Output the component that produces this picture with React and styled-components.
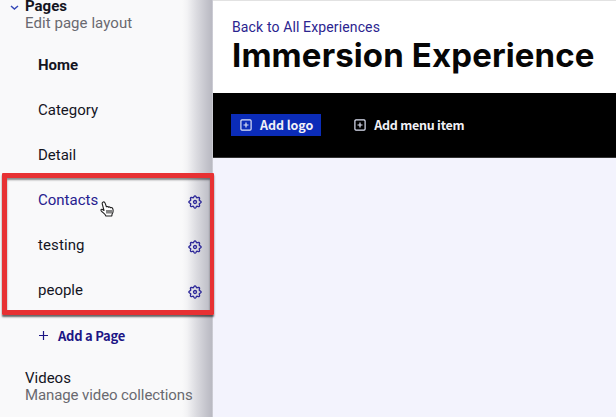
import React from 'react';
import styled, { createGlobalStyle } from 'styled-components';

const Global = createGlobalStyle`
  * { box-sizing: border-box; }
  body { margin: 0; overflow: hidden; }
`;

const Screen = styled.div`
  position: relative;
  display: grid;
  grid-template-columns: 213px 1fr;
  width: 616px;
  height: 417px;
  overflow: hidden;
  font-family: Roboto, sans-serif;
  background: #f3f3fd;
`;

const Sidebar = styled.nav`
  display: flex;
  flex-direction: column;
  color: #14151f;
  font-size: 15px;
  background: linear-gradient(to right, #f9f9fa 182px, #f3f3f5 187px, #dcdce1 196px, #c3c3cb 207px, #b9b9c2 212px, #dedee5 213px);
`;

const Section = styled.section`
  display: grid;
  grid-template-columns: 16px 1fr;
  column-gap: 9px;
  height: ${p => p.$height}px;
  padding-top: ${p => p.$top || 0}px;
`;

const SectionText = styled.div`
  display: flex;
  flex-direction: column;
  line-height: 17px;
  white-space: nowrap;
`;

const SectionName = styled.span`
  line-height: ${p => (p.$open ? 13 : 17)}px;
  padding-bottom: ${p => (p.$open ? 2 : 0)}px;
  font-weight: ${p => (p.$open ? 700 : 400)};
`;

const SectionNote = styled.span`
  color: #696970;
  letter-spacing: ${p => p.$spacing}px;
`;

const Chevron = styled.svg`
  width: 9px;
  height: 7px;
  margin: 4px 0 0 10px;
`;

const PageList = styled.ul`
  margin: 0;
  padding: 0;
  list-style: none;
`;

const PageItem = styled.li`
  display: flex;
  align-items: center;
  justify-content: space-between;
  height: 45px;
  padding: 0 11px 0 38px;
  color: ${p => (p.$hovered ? '#27208f' : '#14151f')};
  font-weight: ${p => (p.$current ? 700 : 400)};
  letter-spacing: ${p => p.$spacing || 0}px;
`;

const GearIcon = styled.svg`
  width: 14px;
  height: 14px;
  margin-top: 4px;
`;

const AddPage = styled.button`
  display: flex;
  align-items: center;
  gap: 10px;
  height: 47px;
  padding: 0 0 0 39px;
  border: 0;
  background: none;
  color: #1c1585;
  font: 700 13px 'Noto Sans CJK JP', sans-serif;
  letter-spacing: -0.24px;
`;

const PlusIcon = styled.svg`
  width: 9px;
  height: 9px;
`;

const Main = styled.main`
  display: flex;
  flex-direction: column;
  background: #f3f3fd;
`;

const Header = styled.header`
  height: 93px;
  padding: 17px 0 0 19px;
  border-top: 1px solid #e2e2e2;
  background: #fff;
  white-space: nowrap;
`;

const BackLink = styled.a`
  display: block;
  color: #2b248f;
  font-size: 14px;
  line-height: 18px;
  letter-spacing: 0.13px;
`;

const Title = styled.h1`
  margin: 0;
  color: #060606;
  font: 700 33px/38px Inter, sans-serif;
  letter-spacing: 0.12px;
`;

const MenuBar = styled.div`
  display: flex;
  align-items: center;
  gap: 24px;
  height: 65px;
  padding-left: 18px;
  border-bottom: 1px solid #333;
  background: #000;
`;

const MenuButton = styled.button`
  display: flex;
  align-items: center;
  gap: 8px;
  height: 22px;
  padding: 0 8px 0 9px;
  border: 0;
  background: ${p => (p.$filled ? '#0b2cb8' : 'transparent')};
  color: #f1f1f6;
  font: 700 12.5px/22px 'Noto Sans CJK JP', sans-serif;
  letter-spacing: ${p => (p.$filled ? -0.07 : -0.24)}px;
  white-space: nowrap;
`;

const BoxIcon = styled.svg`
  width: 12px;
  height: 12px;
`;

const Highlight = styled.div`
  position: absolute;
  left: 2px;
  top: 173px;
  width: 212px;
  height: 142px;
  border: 5px solid #e73133;
  border-width: 5px 4px 5px 5px;
  border-radius: 1px;
  box-shadow: 0 2px 2px rgba(0, 0, 0, 0.6), inset 0 2px 2px rgba(0, 0, 0, 0.45);
`;

const Pointer = styled.svg`
  position: absolute;
  left: 100px;
  top: 201px;
  width: 14px;
  height: 16px;
`;

const gearPoints = Array.from({ length: 64 }, (_, i) => {
  const angle = (i / 64) * Math.PI * 2;
  const radius = 5.4 + 0.8 * Math.cos(angle * 8);
  return `${(7 + radius * Math.sin(angle)).toFixed(2)},${(7 - radius * Math.cos(angle)).toFixed(2)}`;
}).join(' ');

function Gear() {
  return (
    <GearIcon viewBox="0 0 14 14" fill="none" stroke="#2c2799" strokeWidth="1.3" strokeLinejoin="round">
      <polygon points={gearPoints} />
      <circle cx="7" cy="7" r="1.5" />
    </GearIcon>
  );
}

function BoxedPlus() {
  return (
    <BoxIcon viewBox="0 0 12 12" fill="none" stroke="#dfe3f6" strokeWidth="1.2">
      <rect x="0.9" y="0.9" width="10.2" height="10.2" rx="1" />
      <path d="M6 3.5v5M3.5 6h5" />
    </BoxIcon>
  );
}

const pages = [
  { name: 'Home', current: true },
  { name: 'Category' },
  { name: 'Detail' },
  { name: 'Contacts', hovered: true, editable: true },
  { name: 'testing', editable: true, spacing: 0.1 },
  { name: 'people', editable: true },
];

export default function App() {
  return (
    <>
      <Global />
      <Screen>
        <Sidebar>
          <Section $height={42}>
            <Chevron viewBox="0 0 9 7" fill="none" stroke="#3548b8" strokeWidth="1.5">
              <path d="M1 2l3.4 3L8 2" />
            </Chevron>
            <SectionText>
              <SectionName $open>Pages</SectionName>
              <SectionNote $spacing={0.06}>Edit page layout</SectionNote>
            </SectionText>
          </Section>
          <PageList>
            {pages.map(page => (
              <PageItem key={page.name} $current={page.current} $hovered={page.hovered} $spacing={page.spacing}>
                {page.name}
                {page.editable && <Gear />}
              </PageItem>
            ))}
          </PageList>
          <AddPage>
            <PlusIcon viewBox="0 0 9 9" fill="none" stroke="#1c1585" strokeWidth="1.2">
              <path d="M4.5 0v9M0 4.5h9" />
            </PlusIcon>
            Add a Page
          </AddPage>
          <Section $height={58} $top={11}>
            <span />
            <SectionText>
              <SectionName>Videos</SectionName>
              <SectionNote $spacing={-0.1}>Manage video collections</SectionNote>
            </SectionText>
          </Section>
        </Sidebar>
        <Main>
          <Header>
            <BackLink>Back to All Experiences</BackLink>
            <Title>Immersion Experience</Title>
          </Header>
          <MenuBar>
            <MenuButton $filled><BoxedPlus />Add logo</MenuButton>
            <MenuButton><BoxedPlus />Add menu item</MenuButton>
          </MenuBar>
        </Main>
        <Highlight />
        <Pointer viewBox="0 0 14 16" fill="#fff" stroke="#202020" strokeWidth="1.1" strokeLinejoin="round">
          <path d="M3.2 1C4.2.7 4.8 1.3 5.2 2.4L6.4 5.8C7.3 5.2 8 5.6 8.3 6.2C9.2 5.6 10 6 10.4 6.7C11.7 6.2 12.6 7 12.9 8.2C13.4 10.5 13.1 11.8 12.1 13L11.8 15H5.9C5.2 13.2 3.4 12.2 1.2 9.8C.5 8.7 1.6 8 2.6 8.5L4 9.5L2.3 3.2C2 2 2.3 1.3 3.2 1Z" />
          <path d="M7 9v3.5M9 9v3.5M11 9v3.5" />
        </Pointer>
      </Screen>
    </>
  );
}
